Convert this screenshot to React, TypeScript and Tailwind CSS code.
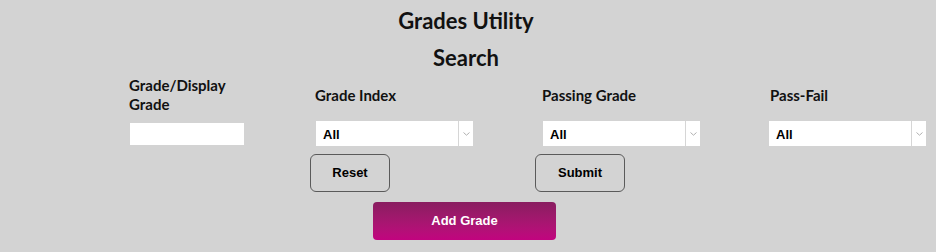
import React from 'react';

const HEAD = "font-['Lato','Noto_Sans',sans-serif] font-bold text-[#111]";
const ARIAL = "font-['Liberation_Sans',Arial,sans-serif]";

function FakeSelect() {
  return (
    <div className="flex h-[25px] w-[157px] bg-white">
      <div className={`flex flex-1 items-center pl-[7px] pt-[2px] text-[13px] font-bold text-black ${ARIAL}`}>All</div>
      <div className="flex w-[15px] items-center justify-center border-l border-[#d6d6d6]">
        <svg width="7" height="4" viewBox="0 0 7 4" fill="none">
          <path d="M0.5 0.5 L3.5 3.2 L6.5 0.5" stroke="#b0b0b0" strokeWidth="1" />
        </svg>
      </div>
    </div>
  );
}

export default function App() {
  return (
    <div className="h-[252px] w-[936px] overflow-hidden bg-[#d3d3d3]">
      <h1 className={`${HEAD} w-[932px] pt-[8px] text-center text-[22px] leading-[26px]`}>Grades Utility</h1>
      <h2 className={`${HEAD} mt-[12px] w-[932px] text-center text-[22px] leading-[24px]`}>Search</h2>

      <div className="mt-[6px] grid grid-cols-[186px_227px_227px_157px] items-center pl-[129px]">
        <div className={`${HEAD} w-[120px] text-[15px] leading-[19px]`}>Grade/Display Grade</div>
        <div className={`${HEAD} text-[15px] leading-[19px]`}>Grade Index</div>
        <div className={`${HEAD} text-[15px] leading-[19px]`}>Passing Grade</div>
        <div className={`${HEAD} pl-[1px] text-[15px] leading-[19px]`}>Pass-Fail</div>

        <div className="mt-[7px] pl-[1px]">
          <input className="h-[22px] w-[114px] bg-white outline-none" />
        </div>
        <div className="mt-[7px] pl-[1px]">
          <FakeSelect />
        </div>
        <div className="mt-[7px] pl-[1px]">
          <FakeSelect />
        </div>
        <div className="mt-[7px]">
          <FakeSelect />
        </div>
      </div>

      <div className="mt-[8px] flex pl-[310px]">
        <button className={`h-[38px] w-[80px] rounded-[6px] border border-[#5a5a5a] text-[13px] font-bold text-black ${ARIAL}`}>
          Reset
        </button>
        <button className={`ml-[145px] h-[38px] w-[90px] rounded-[6px] border border-[#5a5a5a] text-[13px] font-bold text-black ${ARIAL}`}>
          Submit
        </button>
      </div>

      <div className="mt-[10px] pl-[373px]">
        <button className={`h-[38px] w-[183px] rounded-[4px] bg-gradient-to-b from-[#891d60] to-[#c2037f] text-[13px] font-bold text-white ${ARIAL}`}>
          Add Grade
        </button>
      </div>
    </div>
  );
}
